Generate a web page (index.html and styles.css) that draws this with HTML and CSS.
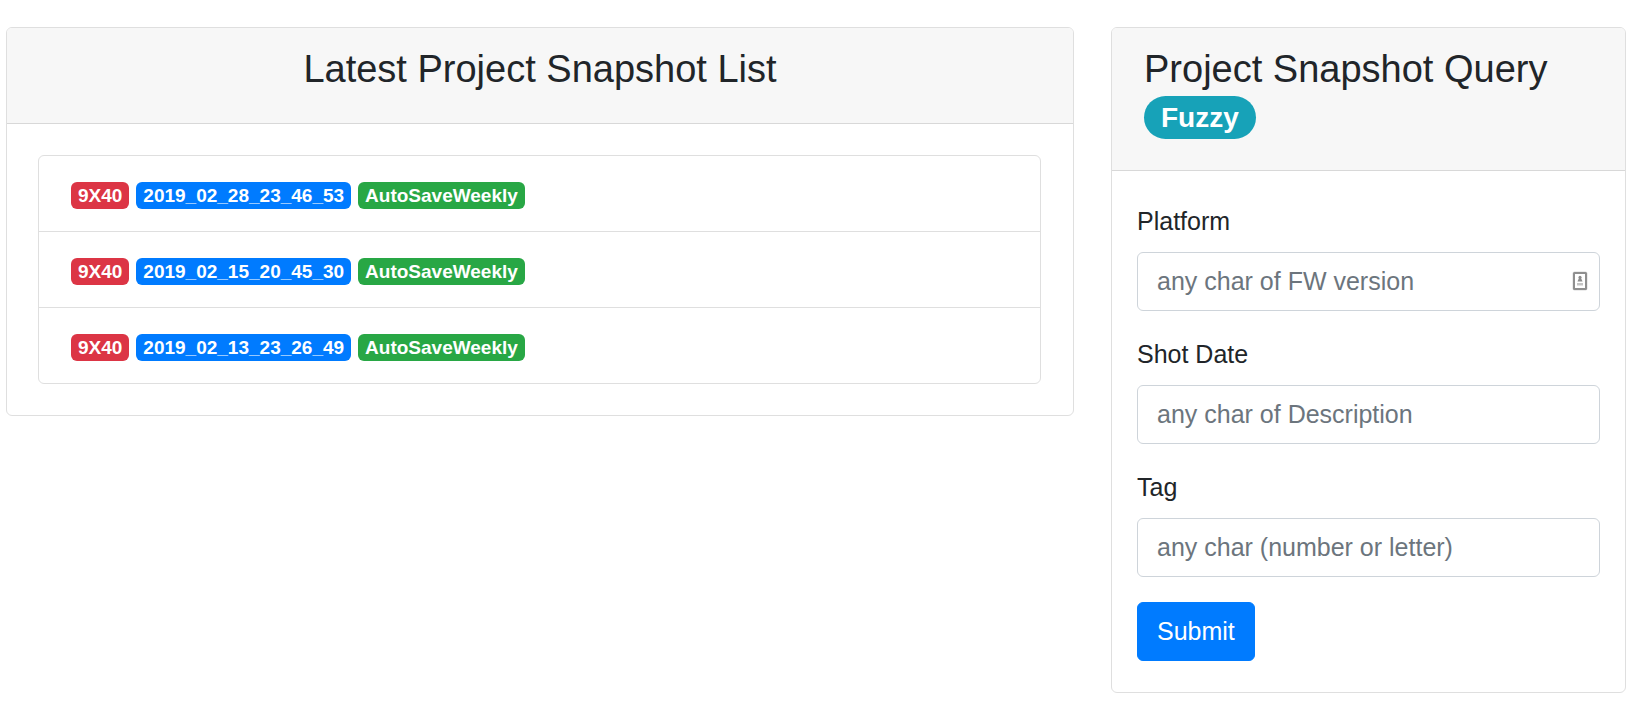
FILE: index.html
```
<!DOCTYPE html>
<html lang="en">
<head>
  <meta charset="utf-8">
  <meta name="viewport" content="width=device-width, initial-scale=1">
  <title>Project Snapshots</title>
  <link rel="stylesheet" href="styles.css">
</head>
<body>
  <main class="layout">
    <section class="card">
      <header class="card-header card-header-center">
        <h2 class="card-title">Latest Project Snapshot List</h2>
      </header>
      <div class="card-body">
        <ul class="list">
          <li class="list-item">
            <span class="badge badge-danger">9X40</span>
            <span class="badge badge-primary">2019_02_28_23_46_53</span>
            <span class="badge badge-success">AutoSaveWeekly</span>
          </li>
          <li class="list-item">
            <span class="badge badge-danger">9X40</span>
            <span class="badge badge-primary">2019_02_15_20_45_30</span>
            <span class="badge badge-success">AutoSaveWeekly</span>
          </li>
          <li class="list-item">
            <span class="badge badge-danger">9X40</span>
            <span class="badge badge-primary">2019_02_13_23_26_49</span>
            <span class="badge badge-success">AutoSaveWeekly</span>
          </li>
        </ul>
      </div>
    </section>

    <section class="card">
      <header class="card-header">
        <h2 class="card-title">Project Snapshot Query <span class="badge badge-pill">Fuzzy</span></h2>
      </header>
      <form class="card-body query-form">
        <div class="field">
          <label class="label" for="platform">Platform</label>
          <div class="control">
            <input class="input" id="platform" type="text" placeholder="any char of FW version">
            <svg class="autofill-icon" width="16" height="20" viewBox="0 0 16 20" aria-hidden="true">
              <rect x="0.500" y="0.500" width="15" height="19" rx="2" fill="#d9d9d9"/>
              <rect x="2" y="2" width="12" height="16" rx="0.500" fill="#fff" stroke="#8f8f8f" stroke-width="2"/>
              <circle cx="8" cy="6.300" r="1.500" fill="#8c8c8c"/>
              <path d="M7 7 H9 L10.500 10.500 H5.500 Z" fill="#8c8c8c"/>
              <path d="M5 12 H11 V14.500 H5 Z" fill="#c4c4c4"/>
            </svg>
          </div>
        </div>
        <div class="field">
          <label class="label" for="date">Shot Date</label>
          <input class="input" id="date" type="text" placeholder="any char of Description">
        </div>
        <div class="field">
          <label class="label" for="tag">Tag</label>
          <input class="input" id="tag" type="text" placeholder="any char (number or letter)">
        </div>
        <button class="button" type="submit">Submit</button>
      </form>
    </section>
  </main>
</body>
</html>
```
FILE: styles.css
```
*,
*::before,
*::after {
  box-sizing: border-box;
}

body {
  margin: 0;
  background: #fff;
  color: #212529;
  font-family: "Liberation Sans", Arial, sans-serif;
  font-size: 25px;
  line-height: 37px;
}

.layout {
  display: grid;
  grid-template-columns: 1068fr 515fr;
  gap: 37px;
  align-items: start;
  padding: 27px 12px 24px 6px;
}

.card {
  min-width: 0;
  border: 1px solid #dfdfdf;
  border-radius: 6px;
  background: #fff;
}

.card-header {
  padding: 19px 32px;
  border-bottom: 1px solid #d8d8d8;
  border-radius: 5px 5px 0 0;
  background: #f7f7f7;
}

.card-header-center {
  text-align: center;
}

.card-title {
  margin: 0 0 12px;
  font-size: 38px;
  font-weight: 500;
  line-height: 45px;
}

.card-body {
  padding: 31px 32px 31px 31px;
}

.list {
  margin: 0;
  padding: 0;
  border: 1px solid #dfdfdf;
  border-radius: 6px;
  list-style: none;
}

.list-item {
  padding: 19px 32px;
}

.list-item + .list-item {
  border-top: 1px solid #dfdfdf;
}

.badge {
  display: inline-block;
  padding: 4px 7px;
  border-radius: 6px;
  color: #fff;
  font-size: 19px;
  font-weight: 700;
  line-height: 19px;
  white-space: nowrap;
  vertical-align: baseline;
}

.badge-danger {
  background: #dc3545;
}

.badge-primary {
  background: #007bff;
}

.badge-success {
  background: #28a745;
}

.badge-pill {
  padding: 8px 17px 7px;
  border-radius: 100px;
  background: #17a2b8;
  font-size: 28px;
  line-height: 28px;
}

.query-form {
  padding: 32px 25px 31px;
}

.field {
  margin-bottom: 25px;
}

.label {
  display: block;
  margin-bottom: 12px;
}

.control {
  position: relative;
}

.input {
  display: block;
  width: 100%;
  height: 59px;
  padding: 9px 19px;
  border: 1px solid #ced4da;
  border-radius: 6px;
  background: #fff;
  color: #495057;
  font: inherit;
}

.input::placeholder {
  color: #6c757d;
  opacity: 1;
}

.autofill-icon {
  position: absolute;
  top: 19px;
  right: 12px;
}

.button {
  display: block;
  padding: 10px 19px;
  border: 1px solid #007bff;
  border-radius: 6px;
  background: #007bff;
  color: #fff;
  font: inherit;
  cursor: pointer;
}

@media (max-width: 900px) {
  .layout {
    grid-template-columns: 1fr;
  }
}
```
